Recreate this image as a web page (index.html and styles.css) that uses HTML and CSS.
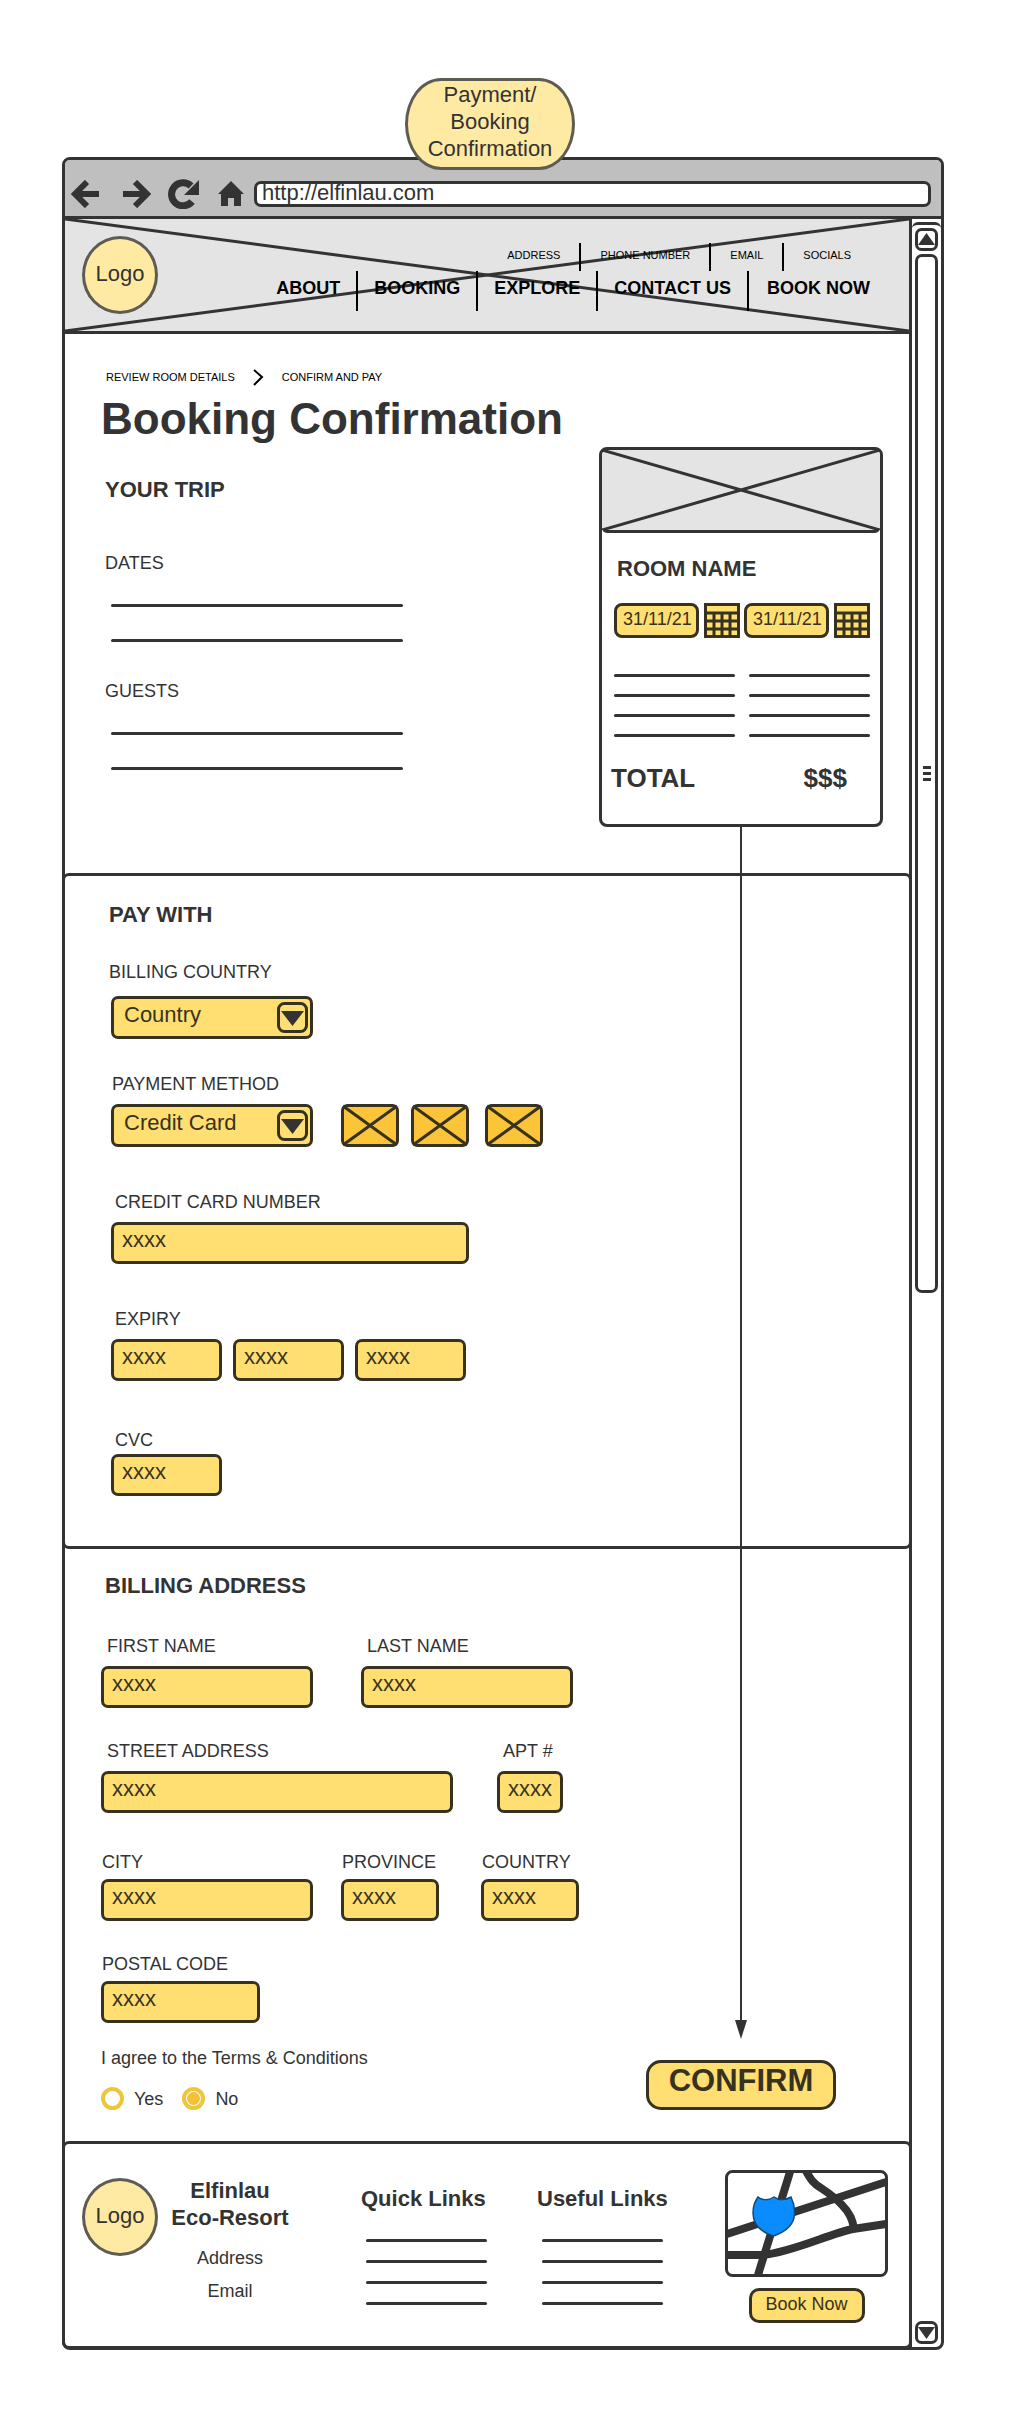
FILE: index.html
```html
<!DOCTYPE html>
<html lang="en">
<head>
  <meta charset="utf-8">
  <meta name="viewport" content="width=device-width, initial-scale=1">
  <title>Booking Confirmation</title>
  <link rel="stylesheet" href="styles.css">
</head>
<body>
  <div class="board">
    <div class="board-title"><p class="pill">Payment/<br>Booking<br>Confirmation</p></div>

    <div class="browser">
      <div class="toolbar">
        <div class="toolbar-icons">
          <button class="icon-button" type="button" aria-label="Back">
            <svg width="28" height="28" viewBox="0 0 28 28"><path d="M28 14H5M16 2 4 14l12 12" fill="none" stroke="#333" stroke-width="6"/></svg>
          </button>
          <button class="icon-button" type="button" aria-label="Forward">
            <svg width="28" height="28" viewBox="0 0 28 28"><path d="M0 14h23M12 2l12 12-12 12" fill="none" stroke="#333" stroke-width="6"/></svg>
          </button>
          <button class="icon-button" type="button" aria-label="Reload">
            <svg width="31" height="30" viewBox="0 0 31 30"><path d="M24 22.500A11.500 11.500 0 1 1 23 7" fill="none" stroke="#333" stroke-width="7"/><path d="M31 1v15H16z" fill="#333"/></svg>
          </button>
          <button class="icon-button" type="button" aria-label="Home">
            <svg width="26" height="26" viewBox="0 0 26 26"><path d="M13 0 26 13h-3v12h-7v-8h-6v8H3V13H0z" fill="#333"/></svg>
          </button>
        </div>
        <input class="url" type="text" aria-label="Web address" value="http://elfinlau.com">
      </div>

      <div class="viewport">
        <div class="page">
          <header class="site-header">
            <svg class="cross" viewBox="0 0 100 100" preserveAspectRatio="none" aria-hidden="true"><path d="M0 0 100 100M0 100 100 0"/></svg>
            <a class="logo" href="#">Logo</a>
            <nav class="menus">
              <ul class="menu menu-small">
                <li><a href="#">ADDRESS</a></li>
                <li><a href="#">PHONE NUMBER</a></li>
                <li><a href="#">EMAIL</a></li>
                <li><a href="#">SOCIALS</a></li>
              </ul>
              <ul class="menu menu-main">
                <li><a href="#">ABOUT</a></li>
                <li><a href="#">BOOKING</a></li>
                <li><a href="#">EXPLORE</a></li>
                <li><a href="#">CONTACT US</a></li>
                <li><a href="#">BOOK NOW</a></li>
              </ul>
            </nav>
          </header>

          <section class="trip">
            <div class="trip-info">
              <nav class="crumbs" aria-label="Progress">
                <a href="#">REVIEW ROOM DETAILS</a>
                <svg width="11" height="17" viewBox="0 0 11 17" aria-hidden="true"><path d="M1 1l8 7-8 8" fill="none" stroke="#000" stroke-width="2"/></svg>
                <a href="#">CONFIRM AND PAY</a>
              </nav>
              <h1>Booking Confirmation</h1>
              <h2 class="trip-heading">YOUR TRIP</h2>
              <h3>DATES</h3>
              <div class="lines trip-lines"><span></span><span></span></div>
              <h3 class="next-heading">GUESTS</h3>
              <div class="lines trip-lines"><span></span><span></span></div>
            </div>
            <aside class="card">
              <div class="card-cover">
                <svg class="cross" viewBox="0 0 100 100" preserveAspectRatio="none" aria-hidden="true"><path d="M0 0 100 100M0 100 100 0"/></svg>
              </div>
              <div class="card-body">
                <h2 class="card-heading">ROOM NAME</h2>
                <div class="dates">
                  <div class="date">
                    <input type="text" aria-label="Check in" value="31/11/21">
                    <svg width="36" height="35" viewBox="0 0 36 35" aria-hidden="true"><rect x="1.500" y="1.500" width="33" height="32" fill="#ffdf71"/><path d="M1.500 1.500h33v32h-33zM0 10h36M0 18h36M0 26h36M10 10v24M18 10v24M26 10v24" fill="none" stroke="#37321f" stroke-width="3"/></svg>
                  </div>
                  <div class="date">
                    <input type="text" aria-label="Check out" value="31/11/21">
                    <svg width="36" height="35" viewBox="0 0 36 35" aria-hidden="true"><rect x="1.500" y="1.500" width="33" height="32" fill="#ffdf71"/><path d="M1.500 1.500h33v32h-33zM0 10h36M0 18h36M0 26h36M10 10v24M18 10v24M26 10v24" fill="none" stroke="#37321f" stroke-width="3"/></svg>
                  </div>
                </div>
                <div class="lines card-lines"><span></span><span></span><span></span><span></span><span></span><span></span><span></span><span></span></div>
                <p class="total"><span>TOTAL</span><span>$$$</span></p>
              </div>
            </aside>
          </section>

          <section class="pay">
            <h2>PAY WITH</h2>
            <div class="field field-near">
              <label class="label-flush" for="billing-country">BILLING COUNTRY</label>
              <div class="select select-spaced">
                <select id="billing-country"><option>Country</option></select>
                <svg class="select-arrow" width="31" height="31" viewBox="0 0 31 31" aria-hidden="true"><rect x="1.500" y="1.500" width="28" height="28" rx="6" fill="none" stroke="#37321f" stroke-width="3"/><path d="M4 9h23L15.500 24z" fill="#333"/></svg>
              </div>
            </div>
            <div class="field field-near">
              <label class="label-edge" for="payment-method">PAYMENT METHOD</label>
              <div class="methods">
                <div class="select">
                  <select id="payment-method"><option>Credit Card</option></select>
                  <svg class="select-arrow" width="31" height="31" viewBox="0 0 31 31" aria-hidden="true"><rect x="1.500" y="1.500" width="28" height="28" rx="6" fill="none" stroke="#37321f" stroke-width="3"/><path d="M4 9h23L15.500 24z" fill="#333"/></svg>
                </div>
                <div class="brands">
                  <svg class="brand" viewBox="0 0 58 43" aria-hidden="true"><rect x="1.500" y="1.500" width="55" height="40" rx="5"/><path d="M2 2l54 39M2 41 56 2"/></svg>
                  <svg class="brand" viewBox="0 0 58 43" aria-hidden="true"><rect x="1.500" y="1.500" width="55" height="40" rx="5"/><path d="M2 2l54 39M2 41 56 2"/></svg>
                  <svg class="brand brand-last" viewBox="0 0 58 43" aria-hidden="true"><rect x="1.500" y="1.500" width="55" height="40" rx="5"/><path d="M2 2l54 39M2 41 56 2"/></svg>
                </div>
              </div>
            </div>
            <div class="field">
              <label for="card-number">CREDIT CARD NUMBER</label>
              <input class="card-number" id="card-number" type="text" value="xxxx">
            </div>
            <div class="field">
              <label for="expiry-day">EXPIRY</label>
              <div class="expiry">
                <input class="short" id="expiry-day" type="text" value="xxxx">
                <input class="short" type="text" aria-label="Expiry month" value="xxxx">
                <input class="short" type="text" aria-label="Expiry year" value="xxxx">
              </div>
            </div>
            <div class="field field-tight">
              <label for="cvc">CVC</label>
              <input class="short" id="cvc" type="text" value="xxxx">
            </div>
          </section>

          <section class="address">
            <h2>BILLING ADDRESS</h2>
            <div class="row row-names">
              <div class="field name"><label for="first-name">FIRST NAME</label><input id="first-name" type="text" value="xxxx"></div>
              <div class="field name"><label for="last-name">LAST NAME</label><input id="last-name" type="text" value="xxxx"></div>
            </div>
            <div class="row row-street">
              <div class="field street"><label for="street">STREET ADDRESS</label><input id="street" type="text" value="xxxx"></div>
              <div class="field apt"><label for="apt">APT #</label><input id="apt" type="text" value="xxxx"></div>
            </div>
            <div class="row row-city">
              <div class="field name"><label for="city">CITY</label><input id="city" type="text" value="xxxx"></div>
              <div class="field region"><label for="province">PROVINCE</label><input id="province" type="text" value="xxxx"></div>
              <div class="field region region-last"><label for="country">COUNTRY</label><input id="country" type="text" value="xxxx"></div>
            </div>
            <div class="row row-postal">
              <div class="field postal"><label for="postal">POSTAL CODE</label><input id="postal" type="text" value="xxxx"></div>
            </div>
            <div class="submit-row">
              <fieldset class="terms">
                <legend>I agree to the Terms &amp; Conditions</legend>
                <div class="choices">
                  <label><input type="radio" name="terms" value="yes">Yes</label>
                  <label><input type="radio" name="terms" value="no" checked>No</label>
                </div>
              </fieldset>
              <button class="confirm" type="button">CONFIRM</button>
            </div>
          </section>

          <footer class="site-footer">
            <a class="logo" href="#">Logo</a>
            <div class="contact">
              <h2>Elfinlau<br>Eco-Resort</h2>
              <a href="#">Address</a>
              <a href="#">Email</a>
            </div>
            <div class="links">
              <h2>Quick Links</h2>
              <div class="lines"><span></span><span></span><span></span><span></span></div>
            </div>
            <div class="links links-useful">
              <h2>Useful Links</h2>
              <div class="lines"><span></span><span></span><span></span><span></span></div>
            </div>
            <div class="place">
              <svg width="163" height="107" viewBox="0 0 163 107" role="img" aria-label="Map">
                <rect x="1.500" y="1.500" width="160" height="104" rx="6" fill="#fff" stroke="#333" stroke-width="3"/>
                <path d="M65 2 33 105M2 64 161 12M2 85h36C68 82 106 63 128 59l33-5M81 1c5 9 8 13 15 17 9 6 15 10 21 17 8 8 11 15 12 24" fill="none" stroke="#333" stroke-width="8"/>
                <path d="M33 27c3 3 10 4 16 0 5 4 12 3 17 0 2 4 4 11 3.500 17C69 56 60 62 48.500 66 36 62 28 55 28 43c0-6 2-12 5-16z" fill="#0a8cff" stroke="#124a7a" stroke-width="1.500"/>
              </svg>
              <button class="book" type="button">Book Now</button>
            </div>
          </footer>

          <div class="connector" aria-hidden="true">
            <span class="connector-line"></span>
            <svg width="12" height="19" viewBox="0 0 12 19"><path d="M0 0h12L6 19z" fill="#333"/></svg>
          </div>
        </div>

        <div class="scrollbar" aria-hidden="true">
          <svg width="23" height="23" viewBox="0 0 23 23"><rect x="1.500" y="1.500" width="20" height="20" rx="5" fill="none" stroke="#333" stroke-width="3"/><path d="M11.500 5 20 17H3z" fill="#333"/></svg>
          <div class="thumb"><span></span><span></span><span></span></div>
          <div class="track"></div>
          <svg width="23" height="23" viewBox="0 0 23 23"><rect x="1.500" y="1.500" width="20" height="20" rx="5" fill="none" stroke="#333" stroke-width="3"/><path d="M11.500 18 20 6H3z" fill="#333"/></svg>
        </div>
      </div>
    </div>
  </div>
</body>
</html>
```
FILE: styles.css
```css
* {
  box-sizing: border-box;
}

body {
  margin: 0;
  background: #fff;
  color: #333;
  font-family: "Liberation Sans", Arial, sans-serif;
  font-size: 18px;
  line-height: 20px;
}

h1, h2, h3, p, ul {
  margin: 0;
  padding: 0;
}

h1 {
  font-size: 44px;
  line-height: 50px;
}

h2 {
  font-size: 22px;
  line-height: 26px;
}

h3 {
  font-size: 18px;
  font-weight: 400;
}

a {
  color: inherit;
  text-decoration: none;
}

svg {
  display: block;
  flex: none;
}

input, select, button {
  margin: 0;
  font-family: inherit;
  color: #37321f;
}

.board {
  padding: 78px 86px 85px 62px;
}

.board-title {
  display: flex;
  justify-content: center;
  padding-right: 26px;
}

.pill {
  position: relative;
  z-index: 1;
  width: 170px;
  margin-bottom: -13px;
  padding: 0 0 5px;
  border: 3px solid #5e5c52;
  border-radius: 36px / 46px;
  background: #ffeaa3;
  font-size: 22px;
  line-height: 27px;
  text-align: center;
}

.browser {
  border: 3px solid #333;
  border-radius: 8px;
}

/* toolbar */

.toolbar {
  display: flex;
  align-items: center;
  gap: 10px;
  padding: 19px 10px 7px 6px;
  border-bottom: 3px solid #333;
  border-radius: 5px 5px 0 0;
  background: #bfbfbf;
}

.toolbar-icons {
  display: grid;
  grid-template-columns: 52px 45px 50px 26px;
  align-items: center;
}

.icon-button {
  padding: 0;
  border: 0;
  background: none;
}

.url {
  flex: 1;
  min-width: 0;
  height: 26px;
  padding: 0 5px 2px;
  border: 3px solid #333;
  border-radius: 7px;
  background: #fff;
  color: #333;
  font-size: 22px;
}

.viewport {
  display: flex;
}

.page {
  position: relative;
  flex: 1;
  min-width: 0;
  border-right: 3px solid #333;
}

/* header */

.cross {
  position: absolute;
  inset: 0;
  width: 100%;
  height: 100%;
}

.cross path {
  fill: none;
  stroke: #333;
  stroke-width: 3px;
  vector-effect: non-scaling-stroke;
}

.site-header {
  position: relative;
  display: flex;
  align-items: center;
  justify-content: space-between;
  padding: 17px 39px 17px 17px;
  border-bottom: 3px solid #333;
  background: #e4e4e4;
}

.logo {
  position: relative;
  display: flex;
  align-items: center;
  justify-content: center;
  width: 76px;
  height: 78px;
  padding-bottom: 2px;
  border: 3px solid #5e5c52;
  border-radius: 50%;
  background: #ffeaa3;
  font-size: 22px;
}

.menus {
  position: relative;
  display: flex;
  flex-direction: column;
  align-items: flex-end;
  margin-top: 4px;
  color: #000;
}

.menu {
  display: flex;
  list-style: none;
}

.menu li + li {
  border-left: 2px solid #000;
}

.menu-small {
  font-size: 11px;
  line-height: 24px;
}

.menu-small li {
  height: 28px;
  padding: 0 19px;
}

.menu-main {
  font-size: 18px;
  font-weight: 700;
  line-height: 34px;
}

.menu-main li {
  height: 40px;
  padding: 0 16px;
}

.menu-main li:last-child {
  padding: 0 0 0 18px;
}

/* placeholder text lines */

.lines {
  display: grid;
  gap: 18px;
}

.lines span {
  height: 3px;
  border-radius: 2px;
  background: #333;
}

/* trip */

.trip {
  display: grid;
  grid-template-columns: 1fr 284px;
  padding: 35px 26px 46px 36px;
}

.crumbs {
  display: flex;
  gap: 18px;
  padding-left: 5px;
  color: #000;
  font-size: 11px;
  line-height: 16px;
}

.trip-info h1 {
  margin-top: 8px;
}

.trip-info h2, .trip-info h3 {
  padding-left: 4px;
}

.trip-heading {
  margin: 33px 0 50px;
}

.trip-lines {
  width: 292px;
  gap: 32px;
  margin: 31px 0 0 10px;
}

.next-heading {
  margin-top: 39px;
}

.card {
  margin-top: 78px;
  border: 3px solid #333;
  border-radius: 8px;
}

.card-cover {
  position: relative;
  height: 83px;
  border-bottom: 3px solid #333;
  border-radius: 5px;
  background: #e4e4e4;
}

.card-body {
  padding: 23px 10px 31px 12px;
}

.card-heading {
  padding-left: 3px;
}

.dates {
  display: flex;
  justify-content: space-between;
  margin-top: 21px;
}

.date {
  display: flex;
  gap: 5px;
}

.date input {
  width: 85px;
  height: 35px;
  padding: 0 0 2px 6px;
  border: 3px solid #37321f;
  border-radius: 8px;
  background: #ffdf71;
  font-size: 18px;
}

.card-lines {
  grid-template-columns: 1fr 1fr;
  gap: 17px 14px;
  margin-top: 36px;
}

.total {
  display: flex;
  justify-content: space-between;
  margin: 26px 23px 0 -3px;
  font-size: 26px;
  font-weight: 700;
  line-height: 30px;
}

/* form fields */

.field {
  display: flex;
  flex-direction: column;
  align-items: flex-start;
  gap: 10px;
}

.field label {
  padding-left: 6px;
}

.field input, .select select {
  height: 42px;
  padding: 0 8px 6px;
  border: 3px solid #37321f;
  border-radius: 7px;
  background: #ffdf71;
  font-size: 22px;
}

.select {
  position: relative;
  width: 202px;
}

.select select {
  width: 100%;
  height: 43px;
  padding-left: 10px;
  appearance: none;
}

.select-arrow {
  position: absolute;
  top: 6px;
  right: 5px;
  pointer-events: none;
}

/* payment */

.pay {
  margin: 0 -3px;
  padding: 26px 44px 50px;
  border: 3px solid #333;
  border-radius: 7px;
}

.pay .field {
  margin-top: 45px;
}

.pay h2 + .field-near {
  margin-top: 34px;
}

.pay .field-near {
  margin-top: 35px;
}

.pay .field-tight {
  gap: 4px;
  margin-top: 49px;
}

.pay .label-flush {
  padding-left: 0;
}

.pay .label-edge {
  padding-left: 3px;
}

.pay input, .pay .select {
  margin-left: 2px;
}

.pay .select-spaced {
  margin-top: 4px;
}

.methods {
  display: flex;
  gap: 28px;
}

.brands {
  display: flex;
  gap: 12px;
}

.brand {
  width: 58px;
  height: 43px;
  fill: #fcc438;
  stroke: #37321f;
  stroke-width: 3px;
}

.brand-last {
  margin-left: 4px;
}

.card-number {
  width: 358px;
}

.expiry {
  display: flex;
  gap: 9px;
}

.short {
  width: 111px;
}

/* billing address */

.address {
  padding: 24px 73px 31px 36px;
}

.address h2 {
  padding-left: 4px;
}

.address .field input {
  width: 100%;
}

.row {
  display: flex;
  margin-top: 33px;
}

.row-names {
  gap: 48px;
  margin-top: 37px;
}

.row-street {
  gap: 44px;
}

.row-city {
  gap: 28px;
  margin-top: 39px;
}

.row-city .field, .row-postal .field {
  gap: 7px;
}

.row-city label, .row-postal label {
  padding-left: 1px;
}

.name {
  width: 212px;
}

.street {
  width: 352px;
}

.apt {
  width: 66px;
}

.region {
  width: 98px;
}

.region-last {
  margin-left: 14px;
}

.postal {
  width: 159px;
}

.submit-row {
  display: flex;
  align-items: flex-end;
  justify-content: space-between;
  margin-top: 25px;
}

.terms {
  margin: 0;
  padding: 0;
  border: 0;
}

.terms legend {
  padding: 0;
}

.choices {
  display: flex;
  gap: 19px;
  margin-top: 19px;
}

.choices label {
  display: flex;
  align-items: center;
  gap: 10px;
}

.choices input {
  width: 23px;
  height: 23px;
  border: 4px solid #edc63c;
  border-radius: 50%;
  background: #fff;
  appearance: none;
}

.choices input:checked {
  background: #f5bf36 content-box;
  padding: 1px;
}

.confirm {
  width: 190px;
  height: 50px;
  padding: 0 0 8px;
  border: 3px solid #37321f;
  border-radius: 15px;
  background: #ffdf71;
  font-size: 31px;
  font-weight: 700;
}

/* footer */

.site-footer {
  display: flex;
  align-items: flex-start;
  margin: 0 -3px -2px;
  padding: 26px 21px 23px 17px;
  border: 3px solid #333;
  border-radius: 7px;
}

.site-footer .logo {
  margin-top: 8px;
}

.contact {
  display: flex;
  flex-direction: column;
  align-items: center;
  gap: 13px;
  width: 118px;
  margin: 7px 0 0 13px;
  text-align: center;
}

.contact h2 {
  margin-bottom: 4px;
  line-height: 27px;
}

.links {
  margin: 16px 0 0 72px;
}

.links .lines {
  width: 121px;
  margin: 27px 0 0 5px;
}

.links-useful {
  margin-left: 50px;
}

.place {
  display: flex;
  flex-direction: column;
  align-items: center;
  gap: 11px;
  margin-left: auto;
}

.book {
  width: 116px;
  height: 35px;
  padding: 0 0 3px;
  border: 3px solid #37321f;
  border-radius: 10px;
  background: #ffdf71;
  font-size: 18px;
}

/* arrow from the room card to the confirm button */

.connector {
  position: absolute;
  top: 608px;
  right: 162px;
  bottom: 308px;
  display: flex;
  flex-direction: column;
  align-items: center;
  pointer-events: none;
}

.connector-line {
  flex: 1;
  width: 2px;
  background: #333;
}

/* scrollbar */

.scrollbar {
  display: flex;
  flex-direction: column;
  align-items: center;
  gap: 3px;
  width: 29px;
  margin-top: 3px;
  padding: 3px 0;
  border-top: 3px solid #333;
  border-radius: 6px 6px 0 0;
}

.thumb {
  display: flex;
  flex: 101;
  flex-direction: column;
  align-items: center;
  justify-content: center;
  gap: 3px;
  width: 23px;
  border: 3px solid #333;
  border-radius: 7px;
}

.thumb span {
  width: 8px;
  height: 3px;
  background: #333;
}

.track {
  flex: 100;
}
```
